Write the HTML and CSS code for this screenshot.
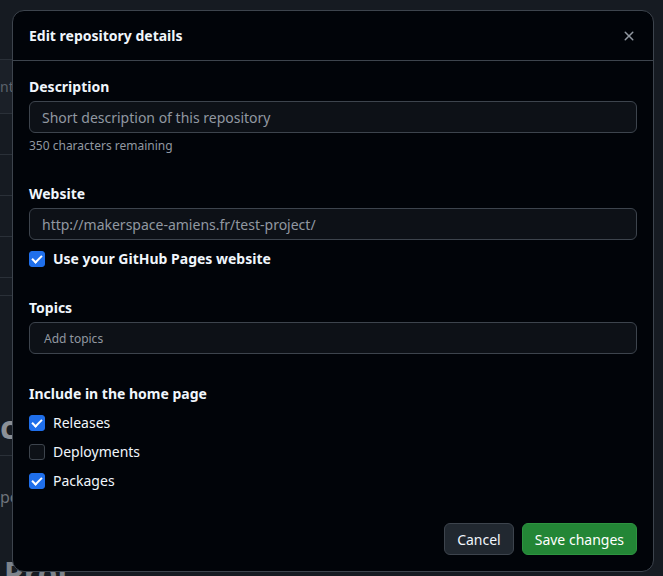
FILE: index.html
```html
<!DOCTYPE html>
<html lang="en">
<head>
  <meta charset="UTF-8" />
  <meta name="viewport" content="width=device-width, initial-scale=1.0"/>
  <title>Edit repository details</title>
  <link rel="stylesheet" href="styles.css">
</head>
<body>
  <div class="page">
    <div class="side">
      <div class="side-row side-hl"><span class="side-text">nte</span></div>
      <div class="side-row"></div>
      <div class="side-row"></div>
      <div class="side-row"></div>
      <div class="side-row"></div>
      <div class="side-row short"></div>
      <div class="side-row"></div>
      <div class="side-title">ct</div>
      <div class="side-sub">po</div>
      <div class="side-big">Proj</div>
    </div>
  </div>

  <div class="modal">
    <div class="modal-header">
      <h2 class="modal-title">Edit repository details</h2>
      <button class="close-btn" aria-label="Close">
        <svg width="16" height="16" viewBox="0 0 16 16" fill="currentColor"><path d="M3.72 3.720a.75.75 0 0 1 1.06 0L8 6.94l3.22-3.22a.749.749 0 0 1 1.275.326.749.749 0 0 1-.215.734L9.060 8l3.22 3.22a.749.749 0 0 1-.326 1.275.749.749 0 0 1-.734-.215L8 9.06l-3.22 3.22a.751.751 0 0 1-1.042-.018.751.751 0 0 1-.018-1.042L6.94 8 3.72 4.78a.75.75 0 0 1 0-1.06Z"/></svg>
      </button>
    </div>

    <div class="modal-body">
      <div class="group">
        <label class="label">Description</label>
        <input class="input" type="text" placeholder="Short description of this repository">
        <p class="note">350 characters remaining</p>
      </div>

      <div class="group">
        <label class="label">Website</label>
        <input class="input" type="text" placeholder="http://makerspace-amiens.fr/test-project/">
        <label class="check-row bold">
          <span class="box checked"></span>Use your GitHub Pages website
        </label>
      </div>

      <div class="group">
        <label class="label">Topics</label>
        <div class="input topics">Add topics</div>
      </div>

      <div class="group last">
        <label class="label">Include in the home page</label>
        <div class="checks">
          <label class="check-row"><span class="box checked"></span>Releases</label>
          <label class="check-row"><span class="box"></span>Deployments</label>
          <label class="check-row"><span class="box checked"></span>Packages</label>
        </div>
      </div>
    </div>

    <div class="modal-footer">
      <button class="btn">Cancel</button>
      <button class="btn btn-primary">Save changes</button>
    </div>
  </div>
</body>
</html>
```

FILE: styles.css
```css
body {
  margin: 0;
  background: #161b22;
  color: #f0f6fc;
  font-family: "Noto Sans", "Liberation Sans", sans-serif;
  font-size: 14px;
}
.page {
  height: 576px;
  overflow: hidden;
}
.side {
  width: 40px;
  padding-top: 59px;
}
.side-row {
  height: 40px;
  border-top: 1px solid #2a3038;
}
.side-row.short {
  height: 17px;
}
.side-hl {
  height: 53px;
  background: #1b2028;
  display: flex;
  align-items: center;
}
.side-text {
  color: #5c636c;
}
.side-title {
  margin-top: 71px;
  font-size: 32px;
  line-height: 40px;
  font-weight: 700;
  color: #8b9097;
  border-bottom: 1px solid #2a3038;
  padding-bottom: 8px;
}
.side-sub {
  margin-top: 30px;
  font-size: 16px;
  color: #6e747b;
}
.side-big {
  margin-top: 45px;
  margin-left: 4px;
  font-size: 32px;
  line-height: 40px;
  font-weight: 700;
  color: #7d838a;
}

.modal {
  position: absolute;
  left: 12px;
  top: 10px;
  width: 642px;
  height: 562px;
  box-sizing: border-box;
  background: #010409;
  border: 1px solid #3d444d;
  border-radius: 12px;
  display: flex;
  flex-direction: column;
}
.modal-header {
  height: 49px;
  border-bottom: 1px solid #3d444d;
  display: flex;
  align-items: center;
  justify-content: space-between;
  padding: 0 8px 0 16px;
}
.modal-title {
  margin: 0;
  font-size: 14px;
  font-weight: 700;
}
.close-btn {
  width: 32px;
  height: 32px;
  border: 0;
  background: none;
  color: #9198a1;
  display: flex;
  align-items: center;
  justify-content: center;
  padding: 0;
}

.modal-body {
  padding: 16px 16px 0;
}
.group + .group {
  margin-top: 29px;
}
.group.last {
  margin-top: 30px;
}
.label {
  display: block;
  font-weight: 700;
  line-height: 20px;
  margin-bottom: 4px;
}
.input {
  display: block;
  width: 100%;
  height: 32px;
  box-sizing: border-box;
  padding: 0 12px;
  background: #0d1117;
  border: 1px solid #3d444d;
  border-radius: 6px;
  color: #9198a1;
  font-family: inherit;
  font-size: 14px;
}
.input::placeholder {
  color: #9198a1;
}
.topics {
  display: flex;
  align-items: center;
  padding-left: 14px;
  font-size: 12px;
}
.note {
  margin: 4px 0 0;
  font-size: 12px;
  line-height: 18px;
  color: #9198a1;
}
.check-row {
  display: flex;
  align-items: center;
  gap: 8px;
  line-height: 20px;
  margin-top: 9px;
}
.check-row.bold {
  font-weight: 700;
}
.checks .check-row {
  margin-top: 9px;
}
.box {
  width: 16px;
  height: 16px;
  box-sizing: border-box;
  border: 1px solid #3d444d;
  border-radius: 3px;
  background: #0d1117;
  position: relative;
}
.box.checked {
  background: #1f6feb;
  border-color: #1f6feb;
}
.box.checked::after {
  content: "";
  position: absolute;
  left: 4px;
  top: 1px;
  width: 4px;
  height: 8px;
  border: solid #fff;
  border-width: 0 2px 2px 0;
  transform: rotate(45deg);
}

.modal-footer {
  margin-top: auto;
  padding: 16px;
  display: flex;
  justify-content: flex-end;
  gap: 8px;
}
.btn {
  height: 32px;
  padding: 0 12px;
  font-family: inherit;
  font-size: 14px;
  font-weight: 400;
  color: #f0f6fc;
  background: #212830;
  border: 1px solid #3d444d;
  border-radius: 6px;
}
.btn-primary {
  background: #238636;
  border-color: #2d9440;
  color: #fff;
}
```
